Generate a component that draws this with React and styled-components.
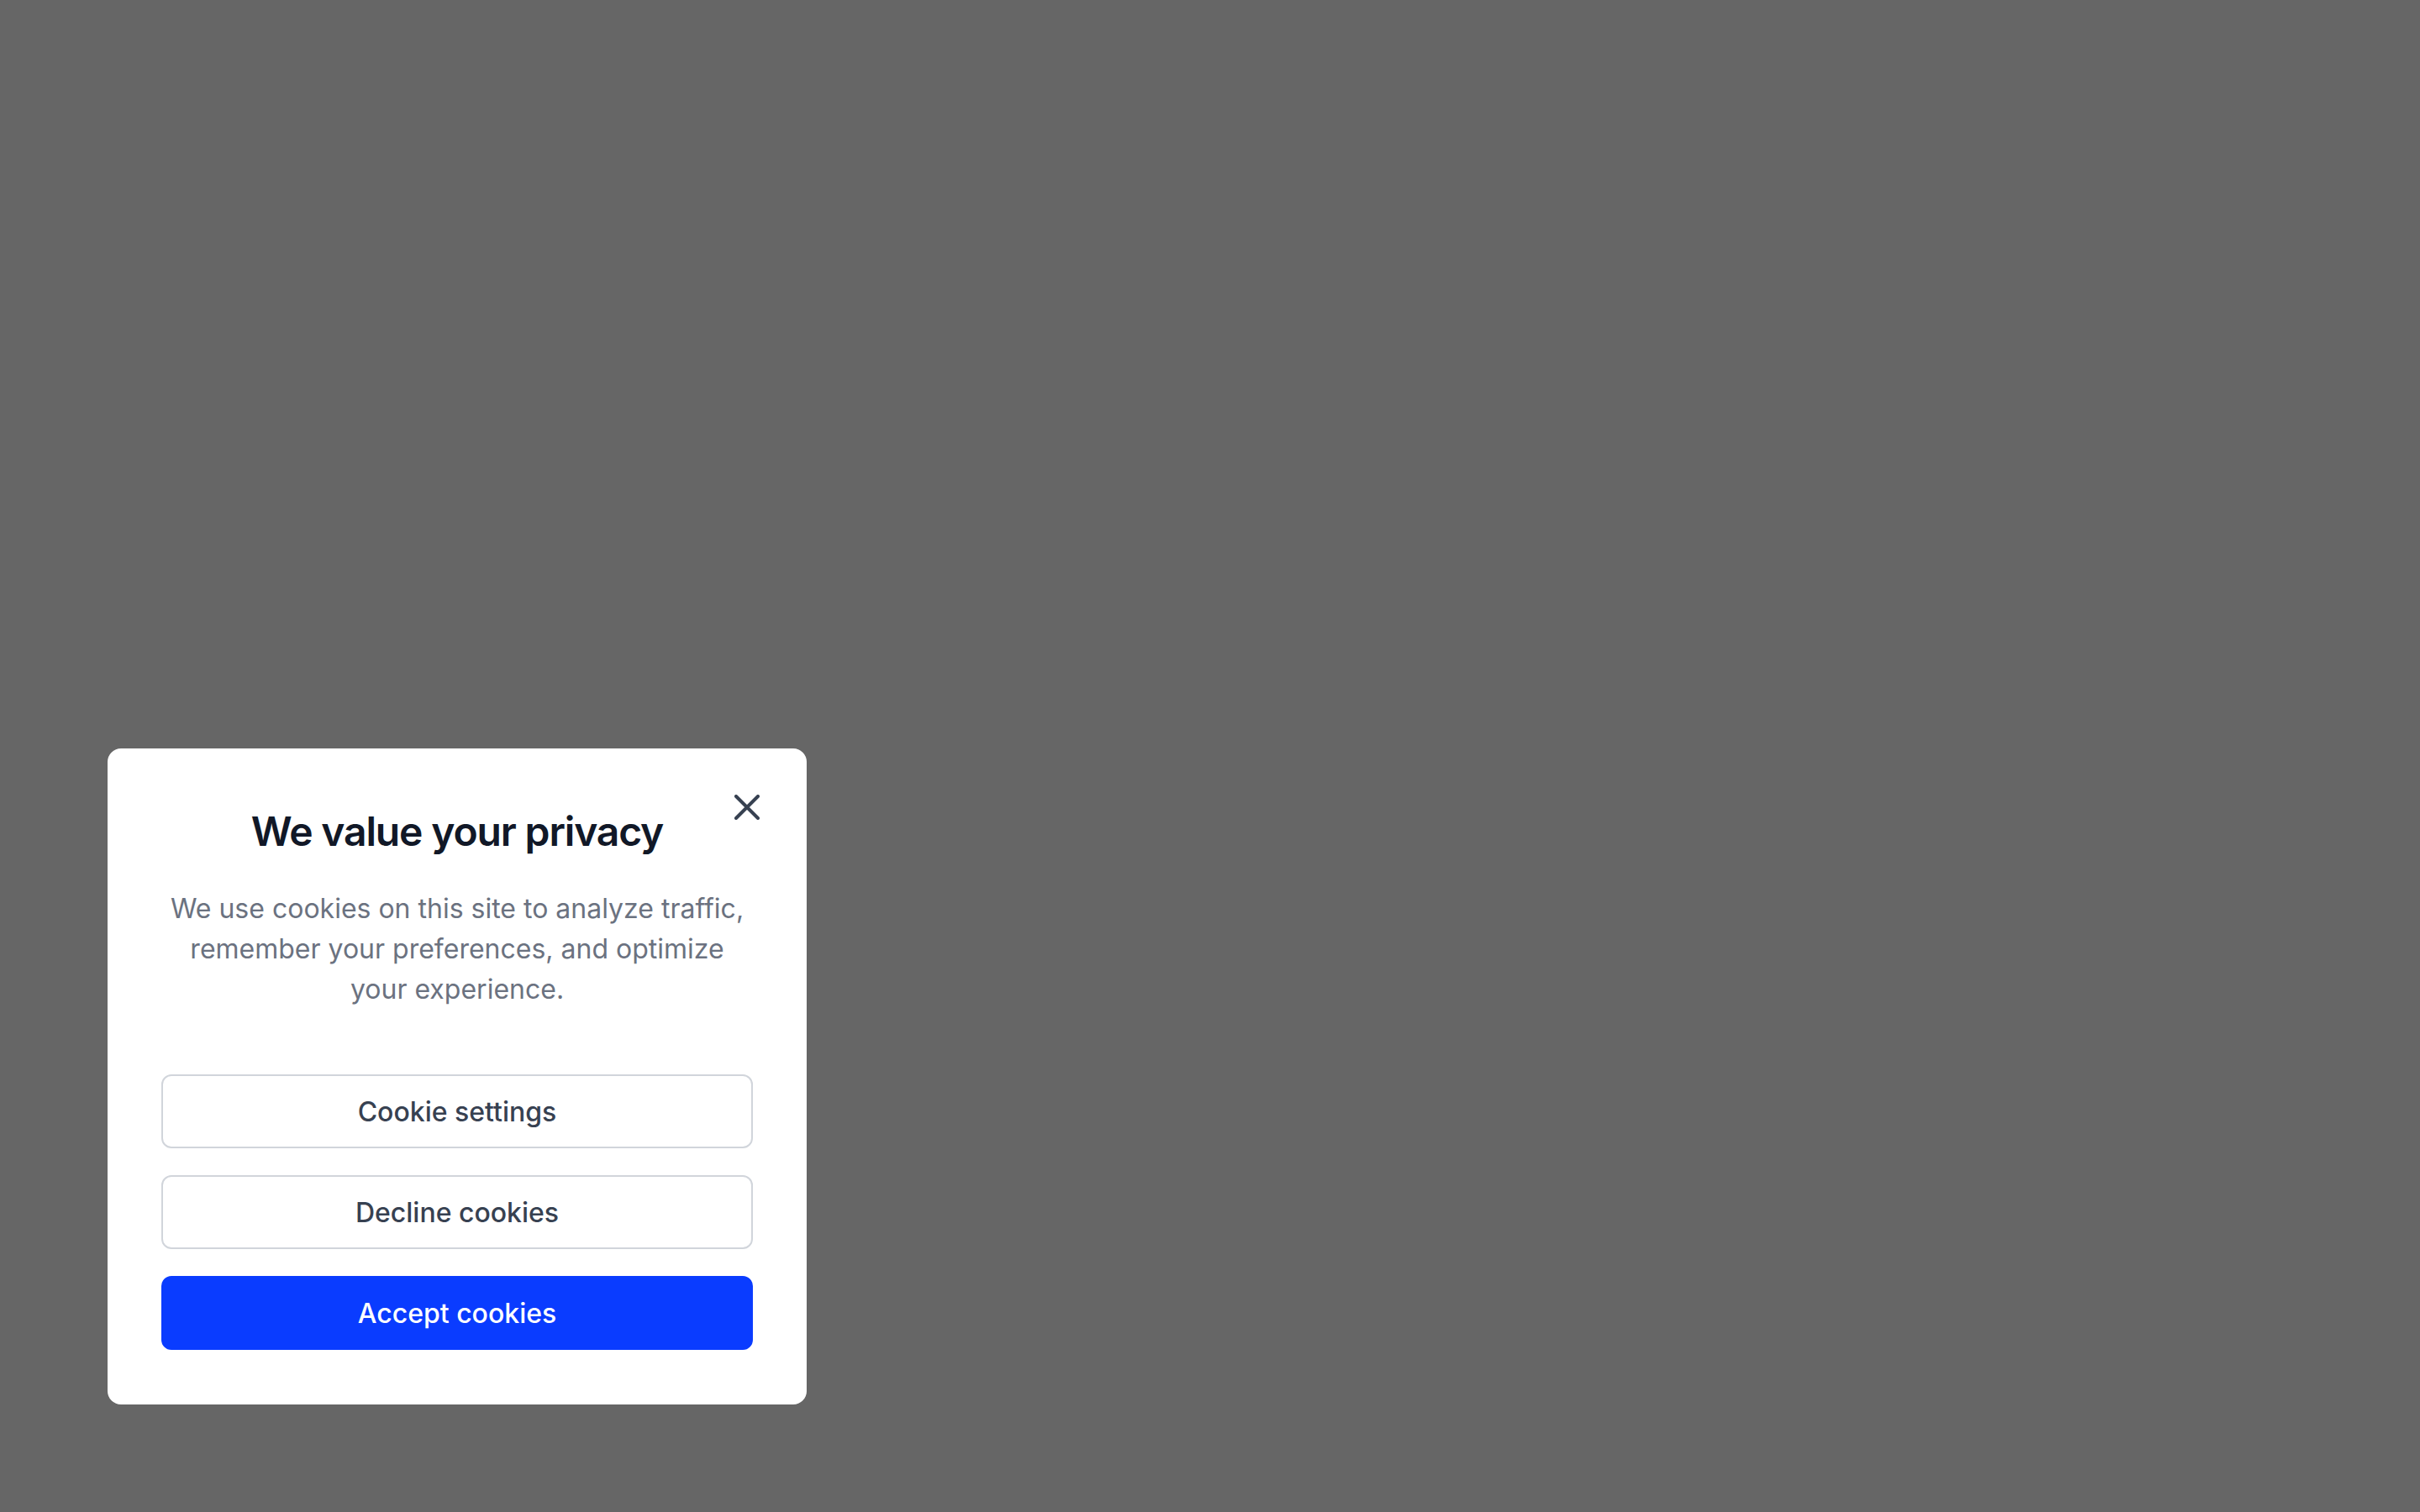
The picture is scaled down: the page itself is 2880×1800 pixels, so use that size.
import React from "react";
import styled, { createGlobalStyle } from "styled-components";

const Global = createGlobalStyle`
  * { box-sizing: border-box; }
  html, body { margin: 0; padding: 0; }
  body {
    background: #666666;
    font-family: Inter, "Noto Sans", sans-serif;
  }
`;

const Page = styled.div`
  min-height: 100vh;
  display: flex;
  align-items: flex-end;
  justify-content: flex-start;
  padding: 0 0 128px 128px;
`;

const Card = styled.section`
  position: relative;
  width: 832px;
  background: #ffffff;
  border-radius: 16px;
  padding: 70px 64px 65px;
  display: flex;
  flex-direction: column;
  align-items: stretch;
`;

const CloseButton = styled.button`
  position: absolute;
  top: 46px;
  right: 47px;
  width: 48px;
  height: 48px;
  padding: 0;
  border: none;
  background: transparent;
  display: flex;
  align-items: center;
  justify-content: center;
  cursor: pointer;
  color: #374151;
`;

const Title = styled.h2`
  margin: 0;
  font-size: 48px;
  line-height: 58px;
  font-weight: 600;
  color: #111827;
  text-align: center;
  letter-spacing: -1.15px;
`;

const Body = styled.p`
  margin: 39px 0 0;
  font-size: 32px;
  line-height: 48px;
  font-weight: 400;
  color: #6b7280;
  text-align: center;
`;

const Actions = styled.div`
  margin-top: 77px;
  display: flex;
  flex-direction: column;
  gap: 32px;
`;

const Button = styled.button`
  height: 88px;
  border-radius: 12px;
  padding-top: 2px;
  font-family: Inter, "Noto Sans", sans-serif;
  font-size: 32px;
  font-weight: 500;
  cursor: pointer;
  border: 2px solid ${(p) => (p.$primary ? "#0a3cff" : "#d1d5db")};
  background: ${(p) => (p.$primary ? "#0a3cff" : "#ffffff")};
  color: ${(p) => (p.$primary ? "#ffffff" : "#374151")};
`;

export default function App() {
  return (
    <>
      <Global />
      <Page>
        <Card>
          <CloseButton aria-label="Close">
            <svg width="30" height="30" viewBox="0 0 30 30" fill="none">
              <path d="M2 2L28 28M28 2L2 28" stroke="currentColor" strokeWidth="4" strokeLinecap="round" />
            </svg>
          </CloseButton>
          <Title>We value your privacy</Title>
          <Body>
            We use cookies on this site to analyze traffic, remember your preferences, and optimize your experience.
          </Body>
          <Actions>
            <Button>Cookie settings</Button>
            <Button>Decline cookies</Button>
            <Button $primary>Accept cookies</Button>
          </Actions>
        </Card>
      </Page>
    </>
  );
}
